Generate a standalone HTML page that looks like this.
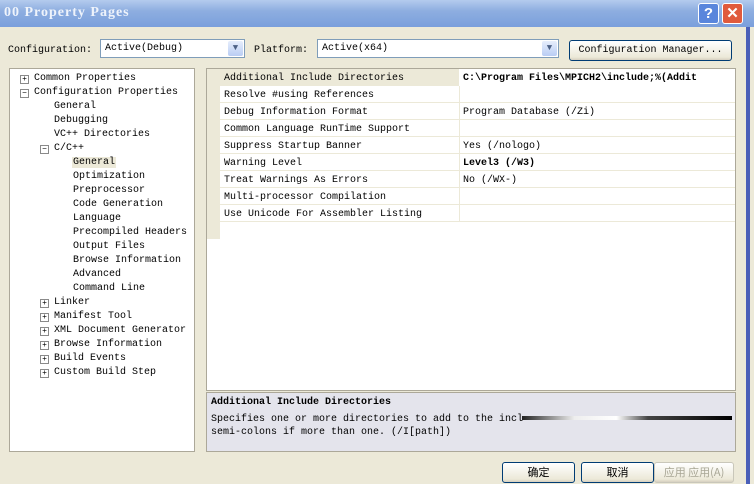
<!DOCTYPE html><html><head><style>
*{margin:0;padding:0;box-sizing:border-box}
body{width:754px;height:484px;background:#ece9d8;font-family:"Liberation Mono","Noto Sans CJK SC",monospace;font-size:10px;color:#000;position:relative;overflow:hidden}
.a{position:absolute;white-space:nowrap}
.title{left:0;top:0;width:754px;height:27px;background:linear-gradient(#b4cbee,#8eaee0 40%,#7a9fdc);}
.title span{position:absolute;left:4px;top:5px;font-family:"Liberation Serif",serif;font-weight:bold;font-size:14px;color:#eef3fb;letter-spacing:1px}
.tb{top:3px;width:21px;height:21px;border:1px solid #fff;border-radius:3px;color:#fff;font:bold 15px "Liberation Sans",sans-serif;text-align:center;line-height:19px}
.combo{height:19px;background:#fff;border:1px solid #7f9db9;padding:3px 4px}
.dd{position:absolute;right:1px;top:1px;width:15px;height:15px;background:linear-gradient(#e6eefc,#b9cdf4);border-radius:2px;color:#4d6185;font-size:9px;text-align:center;line-height:15px}
.btn{height:21px;border:1px solid #003c74;border-radius:3px;background:linear-gradient(#fff,#ece9d8 85%,#d6d0c0);text-align:center;line-height:19px}
.panel{background:#fff;border:1px solid #aca899}
.t{position:absolute;font-size:10px;white-space:nowrap}
.pm{position:absolute;width:9px;height:9px;border:1px solid #8a8a8a;background:#fff;font-size:8px;line-height:7px;text-align:center;color:#000}
.row{position:absolute;left:219px;width:516px;height:17px;border-bottom:1px solid #ece9d8}
.row span{position:absolute;top:4px}
</style></head><body>
<div class="a title"><span>00 Property Pages</span>
<div class="a tb" style="left:698px;background:#5a86dc">?</div>
<div class="a tb" style="left:722px;background:#e05a3c">✕</div></div>
<div class="a" style="left:746px;top:27px;width:4px;height:457px;background:#4a5fb8"></div>
<div class="a" style="left:8px;top:45px">Configuration:</div>
<div class="a combo" style="left:100px;top:39px;width:145px">Active(Debug)<div class="dd">▼</div></div>
<div class="a" style="left:254px;top:45px">Platform:</div>
<div class="a combo" style="left:317px;top:39px;width:242px">Active(x64)<div class="dd">▼</div></div>
<div class="a btn" style="left:569px;top:40px;width:163px">Configuration Manager...</div>

<div class="a panel" style="left:9px;top:68px;width:186px;height:384px">
<div class="pm" style="left:10px;top:6px">+</div><div class="t" style="left:24px;top:4px">Common Properties</div>
<div class="pm" style="left:10px;top:20px">−</div><div class="t" style="left:24px;top:18px">Configuration Properties</div>
<div class="t" style="left:44px;top:32px">General</div>
<div class="t" style="left:44px;top:46px">Debugging</div>
<div class="t" style="left:44px;top:60px">VC++ Directories</div>
<div class="pm" style="left:30px;top:76px">−</div><div class="t" style="left:44px;top:74px">C/C++</div>
<div class="t" style="left:62px;top:88px;background:#ece9d8;padding:0 1px">General</div>
<div class="t" style="left:63px;top:102px">Optimization</div>
<div class="t" style="left:63px;top:116px">Preprocessor</div>
<div class="t" style="left:63px;top:130px">Code Generation</div>
<div class="t" style="left:63px;top:144px">Language</div>
<div class="t" style="left:63px;top:158px">Precompiled Headers</div>
<div class="t" style="left:63px;top:172px">Output Files</div>
<div class="t" style="left:63px;top:186px">Browse Information</div>
<div class="t" style="left:63px;top:200px">Advanced</div>
<div class="t" style="left:63px;top:214px">Command Line</div>
<div class="pm" style="left:30px;top:230px">+</div><div class="t" style="left:44px;top:228px">Linker</div>
<div class="pm" style="left:30px;top:244px">+</div><div class="t" style="left:44px;top:242px">Manifest Tool</div>
<div class="pm" style="left:30px;top:258px">+</div><div class="t" style="left:44px;top:256px">XML Document Generator</div>
<div class="pm" style="left:30px;top:272px">+</div><div class="t" style="left:44px;top:270px">Browse Information</div>
<div class="pm" style="left:30px;top:286px">+</div><div class="t" style="left:44px;top:284px">Build Events</div>
<div class="pm" style="left:30px;top:300px">+</div><div class="t" style="left:44px;top:298px">Custom Build Step</div>
</div>

<div class="a panel" style="left:206px;top:68px;width:530px;height:323px;overflow:hidden">
<div class="a" style="left:0;top:0;width:13px;height:170px;background:#ece9d8"></div>
</div>
<div class="row" style="top:69px;background:#ece9d8"><span style="left:5px">Additional Include Directories</span></div>
<div class="row" style="top:86px"><span style="left:5px">Resolve #using References</span></div>
<div class="row" style="top:103px"><span style="left:5px">Debug Information Format</span></div>
<div class="row" style="top:120px"><span style="left:5px">Common Language RunTime Support</span></div>
<div class="row" style="top:137px"><span style="left:5px">Suppress Startup Banner</span></div>
<div class="row" style="top:154px"><span style="left:5px">Warning Level</span></div>
<div class="row" style="top:171px"><span style="left:5px">Treat Warnings As Errors</span></div>
<div class="row" style="top:188px"><span style="left:5px">Multi-processor Compilation</span></div>
<div class="row" style="top:205px"><span style="left:5px">Use Unicode For Assembler Listing</span></div>
<div class="a" style="left:459px;top:69px;width:1px;height:153px;background:#ece9d8"></div>
<div class="a" style="left:459px;top:69px;width:276px;height:17px;background:#fff"></div>
<div class="t" style="left:463px;top:73px;font-weight:bold">C:\Program Files\MPICH2\include;%(Addit</div>
<div class="t" style="left:463px;top:107px">Program Database (/Zi)</div>
<div class="t" style="left:463px;top:141px">Yes (/nologo)</div>
<div class="t" style="left:463px;top:158px;font-weight:bold">Level3 (/W3)</div>
<div class="t" style="left:463px;top:175px">No (/WX-)</div>

<div class="a" style="left:206px;top:392px;width:530px;height:60px;background:#e4e4ec;border:1px solid #aca899"></div>
<div class="t" style="left:211px;top:397px;font-weight:bold">Additional Include Directories</div>
<div class="t" style="left:211px;top:414px">Specifies one or more directories to add to the incl</div>
<div class="a" style="left:522px;top:416px;width:210px;height:4px;background:linear-gradient(90deg,#222,#eee 25%,#fff 45%,#444 60%,#000)"></div>
<div class="t" style="left:211px;top:427px">semi-colons if more than one.    (/I[path])</div>

<div class="a btn" style="left:502px;top:462px;width:73px;font-family:'Noto Sans CJK SC',sans-serif;font-size:11px">确定</div>
<div class="a btn" style="left:581px;top:462px;width:73px;font-family:'Noto Sans CJK SC',sans-serif;font-size:11px">取消</div>
<div class="a btn" style="left:654px;top:462px;width:80px;border-color:#c9c7ba;color:#a8a695;font-family:'Noto Sans CJK SC',sans-serif;font-size:11px">应用 应用(A)</div>
</body></html>
